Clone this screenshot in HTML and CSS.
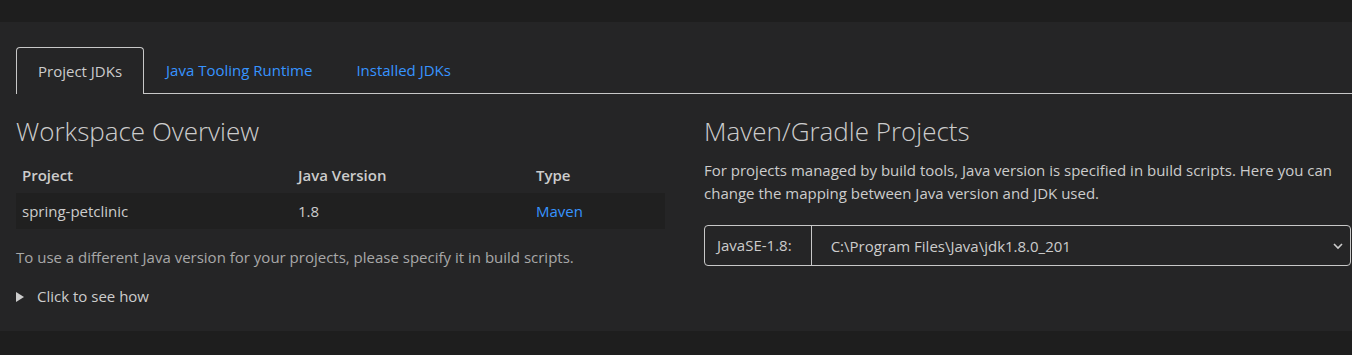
FILE: index.html
```html
<!DOCTYPE html>
<html>
<head>
	<title>Configure Java Runtime</title>
	<link rel="stylesheet" href="styles.css">
</head>
<body>
	<div class="panel">
		<div class="tabs">
			<div class="tab activo">Project JDKs</div>
			<div class="tab">Java Tooling Runtime</div>
			<div class="tab">Installed JDKs</div>
			<div class="resto"></div>
		</div>
		<div class="columnas">
			<div class="columna">
				<h2>Workspace Overview</h2>
				<table class="tabla">
					<thead>
						<tr>
							<th class="c1">Project</th>
							<th class="c2">Java Version</th>
							<th>Type</th>
						</tr>
					</thead>
					<tbody>
						<tr>
							<td>spring-petclinic</td>
							<td>1.8</td>
							<td><a href="#">Maven</a></td>
						</tr>
					</tbody>
				</table>
				<p class="nota">To use a different Java version for your projects, please specify it in build scripts.</p>
				<div class="detalle"><span class="flecha"></span>Click to see how</div>
			</div>
			<div class="columna">
				<h2>Maven/Gradle Projects</h2>
				<p class="texto">For projects managed by build tools, Java version is specified in build scripts. Here you can change the mapping between Java version and JDK used.</p>
				<div class="selector">
					<div class="etiqueta">JavaSE-1.8:</div>
					<div class="valor">C:\Program Files\Java\jdk1.8.0_201</div>
					<svg class="chevron" width="12" height="12" viewBox="0 0 12 12"><path d="M2 4 L6 8 L10 4" fill="none" stroke="#cccccc" stroke-width="1.6"/></svg>
				</div>
			</div>
		</div>
	</div>
</body>
</html>
```

FILE: styles.css
```css
body
{
	margin: 0;
	background-color: #1e1e1e;
	font-family: "Open Sans", "Noto Sans", sans-serif;
	font-size: 15px;
	color: #cccccc;
}
.panel
{
	margin-top: 22px;
	background-color: #252526;
	padding: 25px 0 24px 16px;
	height: 260px;
}
.tabs
{
	display: flex;
	height: 47px;
}
.tab
{
	padding: 0 22px;
	line-height: 47px;
	color: #3794ff;
	border-bottom: 1px solid #c8c8c8;
	box-sizing: border-box;
}
.tab.activo
{
	color: #cccccc;
	border: 1px solid #c8c8c8;
	border-bottom: none;
	border-radius: 4px 4px 0 0;
	padding: 0 21px;
}
.resto
{
	flex: 1;
	border-bottom: 1px solid #c8c8c8;
}
.columnas
{
	display: grid;
	grid-template-columns: 649px 647px;
	column-gap: 39px;
}
h2
{
	font-weight: 300;
	font-size: 26px;
	margin: 19px 0 8px 0;
	line-height: 36px;
	color: #cccccc;
}
.tabla
{
	border-collapse: collapse;
	width: 100%;
	text-align: left;
}
.tabla th
{
	font-weight: 600;
	height: 36px;
	padding: 0 6px;
}
.tabla td
{
	height: 36px;
	padding: 0 6px;
	background-color: #202020;
}
.c1
{
	width: 264px;
}
.c2
{
	width: 226px;
}
a
{
	color: #3794ff;
	text-decoration: none;
}
.nota
{
	margin: 17px 0 0 0;
	line-height: 23px;
	color: #a8a8a8;
}
.detalle
{
	margin-top: 16px;
	line-height: 23px;
	display: flex;
	align-items: center;
}
.flecha
{
	width: 0;
	height: 0;
	border-left: 8px solid #cccccc;
	border-top: 5px solid transparent;
	border-bottom: 5px solid transparent;
	margin-right: 13px;
}
.texto
{
	margin: 0;
	padding-top: 2px;
	line-height: 23px;
}
.selector
{
	margin-top: 20px;
	display: flex;
	align-items: center;
	height: 41px;
	border: 1px solid #c8c8c8;
	border-radius: 4px;
	box-sizing: border-box;
}
.etiqueta
{
	padding: 0 19px 0 12px;
	line-height: 39px;
	border-right: 1px solid #c8c8c8;
}
.valor
{
	flex: 1;
	padding-left: 19px;
}
.chevron
{
	margin-right: 6px;
}
```
